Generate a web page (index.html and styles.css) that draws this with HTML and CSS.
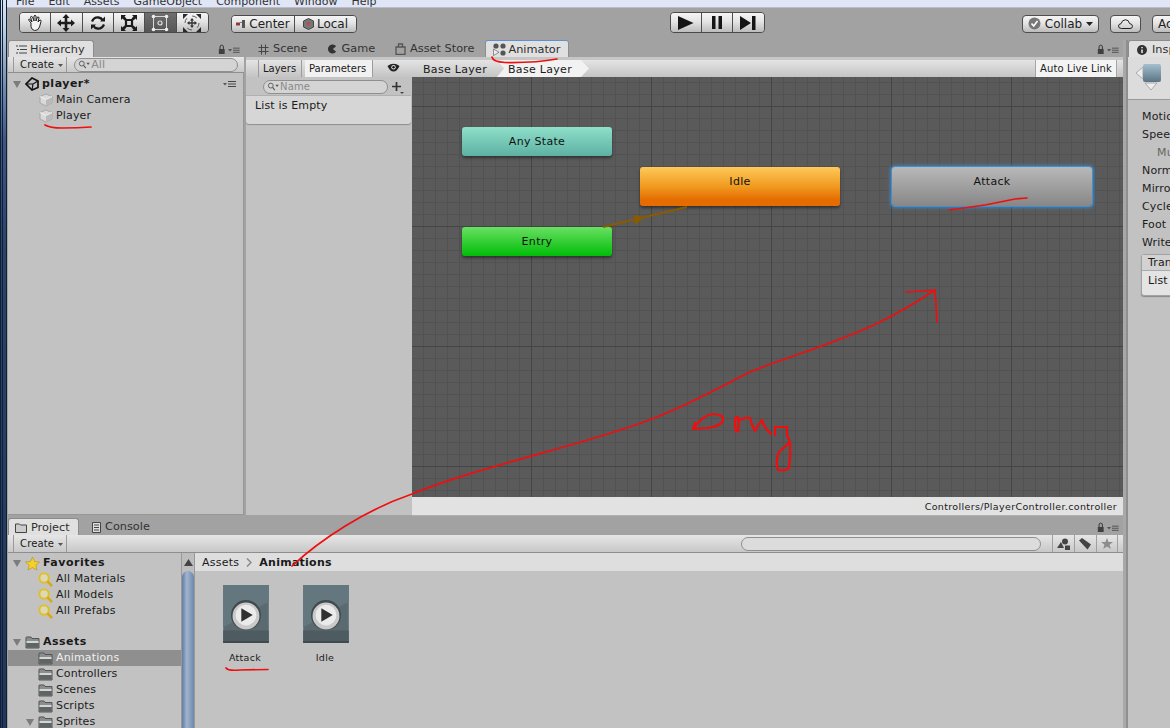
FILE: index.html
```html
<!DOCTYPE html>
<html lang="en">
<head>
<meta charset="utf-8">
<title>Unity Animator</title>
<link rel="stylesheet" href="styles.css">
</head>
<body>
<svg class="defs" width="0" height="0">
  <defs>
    <linearGradient id="motion" x1="0" y1="0" x2="0" y2="1"><stop offset="0" stop-color="#a3bfcf"/><stop offset="1" stop-color="#5c7482"/></linearGradient>
    <symbol id="cube" viewBox="0 0 14 14">
      <path d="M7 1 13 3.500V10L7 13 1 10V3.500Z" fill="#d9d9d9" stroke="#a8a8a8"/>
      <path d="M7 6.500V13L13 10V3.500Z" fill="#b9b9b9"/>
      <path d="M1 3.500 7 6.500 13 3.500" fill="none" stroke="#f0f0f0"/>
    </symbol>
    <symbol id="mag" viewBox="0 0 16 16">
      <circle cx="6.500" cy="6.500" r="5" fill="#dcd9b8" stroke="#e5bf17" stroke-width="2"/>
      <path d="M10 10 15 15" stroke="#d9a90c" stroke-width="2.600"/>
    </symbol>
    <symbol id="folder" viewBox="0 0 15 13">
      <path d="M1 3V1.500Q1 1 1.500 1H6L7 2.500H14V12H1Z" fill="#8a8e8e" stroke="#555"/>
      <path d="M1.500 5H13.500V7H1.500Z" fill="#d4d6d6"/>
      <path d="M1.500 7H13.500V11.500H1.500Z" fill="#5f6565"/>
    </symbol>
    <symbol id="lock" viewBox="0 0 30 12">
      <path d="M1 6H8V12H1Z" fill="#404040"/>
      <path d="M2.500 6V3Q4.500 -0.500 6.500 3V6" fill="none" stroke="#404040" stroke-width="1.300"/>
      <path d="M12 6H17L14.500 9Z" fill="#555"/>
      <path d="M18 5H26M18 7.500H26M18 10H26" stroke="#444"/>
    </symbol>
    <symbol id="menu" viewBox="0 0 14 8">
      <path d="M0 3H4L2 5.500Z" fill="#555"/>
      <path d="M5 1.500H13M5 4H13M5 6.500H13" stroke="#444"/>
    </symbol>
    <symbol id="search" viewBox="0 0 14 10">
      <circle cx="4" cy="4" r="2.700" fill="none" stroke="#555"/>
      <path d="M6 6 8.500 9" stroke="#555" stroke-width="1.200"/>
      <path d="M9 3H13L11 5.500Z" fill="#555"/>
    </symbol>
    <symbol id="tri" viewBox="0 0 10 10"><path d="M1 2H9L5 9Z" fill="#7c7c7c"/></symbol>
    <symbol id="clip" viewBox="1 1 44 56">
      <path d="M1 1H45V57H1Z" fill="#5b6a70"/>
      <path d="M1 1H45V17L1 42Z" fill="#64767e"/>
      <path d="M1 45H45V57H1Z" fill="#4e5b60"/>
      <path d="M1 55H45V57H1Z" fill="#3f4a4e"/>
      <circle cx="23" cy="30" r="14.500" fill="#404a4e"/>
      <circle cx="23" cy="31" r="13" fill="#c9c9c9"/>
      <circle cx="23" cy="30" r="10" fill="#ebebeb"/>
      <path d="M18.500 23.500 29.500 30 18.500 36.500Z" fill="#303030"/>
    </symbol>
  </defs>
</svg>

<div class="app">
  <div class="frame"></div>
  <div class="shell">
    <div class="menubar">
      <span>File</span><span>Edit</span><span>Assets</span><span>GameObject</span><span>Component</span><span>Window</span><span>Help</span>
    </div>

    <div class="toolbar">
      <div class="btn-group tools">
        <button class="tb-btn"><svg width="18" height="18" viewBox="0 0 18 18"><path d="M5 9 3 6.500Q2 5 3.500 5L6 8 4.500 3Q5 1.500 6.500 3L8 7V2Q9 .5 10 2V7L11.500 3Q13 2.500 13 4L12 8 14 6Q15.500 6 15 7.500L13.500 13Q12 17 8.500 16.500 6 16 5 13Z" fill="#f4f4f4" stroke="#222"/></svg></button>
        <button class="tb-btn"><svg width="18" height="18" viewBox="0 0 18 18"><path d="M9 0 12.500 4H10.300V7.700H14V5.500L18 9 14 12.500V10.300H10.300V14H12.500L9 18 5.500 14H7.700V10.300H4V12.500L0 9 4 5.500V7.700H7.700V4H5.500Z" fill="#1c1c1c"/></svg></button>
        <button class="tb-btn"><svg width="16" height="16" viewBox="0 0 16 16"><path d="M2 6.500Q4 2 8.500 2.500 11.500 3 12.500 5" fill="none" stroke="#1c1c1c" stroke-width="2.300"/><path d="M10 6.500H15V1.500Z" fill="#1c1c1c"/><path d="M14 9.500Q12 14 7.500 13.500 4.500 13 3.500 11" fill="none" stroke="#1c1c1c" stroke-width="2.300"/><path d="M6 9.500H1V14.500Z" fill="#1c1c1c"/></svg></button>
        <button class="tb-btn"><svg width="18" height="18" viewBox="0 0 18 18"><path d="M6 6H12V12H6Z" fill="none" stroke="#1c1c1c" stroke-width="2.200"/><path d="M1 1H6L4.500 2.500 6.500 4.500 4.500 6.500 2.500 4.500 1 6ZM17 1V6L15.500 4.500 13.500 6.500 11.500 4.500 13.500 2.500 12 1ZM1 17V12L2.500 13.500 4.500 11.500 6.500 13.500 4.500 15.500 6 17ZM17 17H12L13.500 15.500 11.500 13.500 13.500 11.500 15.500 13.500 17 12Z" fill="#1c1c1c"/></svg></button>
        <button class="tb-btn active"><svg width="18" height="18" viewBox="0 0 18 18"><path d="M2.500 2.500H15.500V15.500H2.500Z" fill="none" stroke="#d8d8d8"/><circle cx="2.500" cy="2.500" r="1.800" fill="#eee"/><circle cx="15.500" cy="2.500" r="1.800" fill="#eee"/><circle cx="2.500" cy="15.500" r="1.800" fill="#eee"/><circle cx="15.500" cy="15.500" r="1.800" fill="#eee"/><circle cx="9" cy="9" r="2" fill="none" stroke="#e0e0e0" stroke-width="1.200"/></svg></button>
        <button class="tb-btn"><svg width="20" height="20" viewBox="0 0 20 20"><path d="M10 5 12 7.500H10.700V9.300H12.500V8L15 10 12.500 12V10.700H10.700V12.500H12L10 15 8 12.500H9.300V10.700H7.500V12L5 10 7.500 8V9.300H9.300V7.500H8Z" fill="#333"/><path d="M1 1H6L1 6ZM19 1V6L14 1ZM1 19V14L6 19ZM19 19H14L19 14Z" fill="#2a2a2a"/><circle cx="10" cy="10" r="7" fill="none" stroke="#555" stroke-dasharray="5 6"/></svg></button>
      </div>
      <div class="btn-group pivot">
        <button class="tb-btn text-btn center"><svg width="10" height="8" viewBox="0 0 10 8"><path d="M0 2.500H4V5.500H0Z" fill="#8a3a3a"/><path d="M4 2.500H6" stroke="#777"/><path d="M6 0H9V8H6Z" fill="#555"/></svg>Center</button>
        <button class="tb-btn text-btn local"><svg width="11" height="12" viewBox="0 0 11 12"><path d="M5.500 .5 10.500 3V9L5.500 11.500.5 9V3Z" fill="#777" stroke="#444"/><path d="M3 4H8L5.500 8Z" fill="#b84b4b"/></svg>Local</button>
      </div>
      <div class="btn-group play">
        <button class="tb-btn"><svg width="16" height="14" viewBox="0 0 16 14"><path d="M0 0 15.500 7 0 14Z" fill="#151515"/></svg></button>
        <button class="tb-btn"><svg width="10" height="13" viewBox="0 0 10 13"><path d="M0 0H3.500V13H0ZM6.500 0H10V13H6.500Z" fill="#151515"/></svg></button>
        <button class="tb-btn"><svg width="16" height="14" viewBox="0 0 16 14"><path d="M0 0 11 7 0 14ZM12 0H15.500V14H12Z" fill="#151515"/></svg></button>
      </div>
      <button class="tb-btn text-btn solo collab"><svg width="13" height="13" viewBox="0 0 13 13"><circle cx="6.500" cy="6.500" r="6" fill="#777"/><path d="M3.500 6.500 5.700 9 9.500 4" fill="none" stroke="#fff" stroke-width="1.600"/></svg>Collab<svg width="7" height="4" viewBox="0 0 7 4"><path d="M0 0H7L3.500 4Z" fill="#222"/></svg></button>
      <button class="tb-btn solo cloud"><svg width="15" height="10" viewBox="0 0 15 10"><path d="M3.500 9.500Q.5 9.500.5 7 .5 5 3 4.700 4 1 7.500.7 11 1 11.500 4.500 14.500 5 14.500 7.300 14.500 9.500 12 9.500Z" fill="none" stroke="#222"/></svg></button>
      <button class="tb-btn text-btn solo account">Account</button>
    </div>

    <div class="dock">
      <div class="dock-main">
        <div class="upper">
          <section class="hierarchy">
            <div class="tabs">
              <div class="tab on hier-tab"><svg width="11" height="9" viewBox="0 0 11 9"><path d="M0 1H2M3 1H11M1 4.500H3M4 4.500H11M0 8H2M3 8H11" stroke="#444"/></svg>Hierarchy</div>
              <svg class="tab-tools" width="25" height="10"><use href="#lock"/></svg>
            </div>
            <div class="pane-bar">
              <div class="create">Create<svg width="5" height="3" viewBox="0 0 5 3"><path d="M0 0H5L2.500 3Z" fill="#555"/></svg></div>
              <div class="search hier-search"><svg width="13" height="9"><use href="#search"/></svg>All</div>
            </div>
            <div class="tree hier-tree">
              <div class="row root"><svg class="tri" width="10" height="10"><use href="#tri"/></svg><svg class="unity" width="14" height="14" viewBox="0 0 14 14"><path d="M7 1 13 4V10.500L7 13 1 7Z" fill="none" stroke="#111" stroke-width="1.700"/><path d="M1 7H8L13 4M8 7 7 13" fill="none" stroke="#111" stroke-width="1.200"/></svg><b>player*</b><svg class="row-menu" width="14" height="8"><use href="#menu"/></svg></div>
              <div class="row item"><svg width="14" height="14"><use href="#cube"/></svg>Main Camera</div>
              <div class="row item"><svg width="14" height="14"><use href="#cube"/></svg>Player</div>
            </div>
          </section>

          <section class="animator">
            <div class="tabs">
              <div class="tab plain"><svg width="11" height="11" viewBox="0 0 11 11"><path d="M3.500 .5V10.500M7.500 .5V10.500M.5 3.500H10.500M.5 7.500H10.500" stroke="#444"/></svg>Scene</div>
              <div class="tab plain"><svg width="10" height="10" viewBox="0 0 11 11"><path d="M10 2.500A5 5 0 1 0 10 8.500L6.500 5.500Z" fill="#333"/></svg>Game</div>
              <div class="tab plain"><svg width="11" height="12" viewBox="0 0 11 12"><path d="M1 4H10V11.500H1ZM3.500 4V1H7.500V4" fill="none" stroke="#555" stroke-width="1.300"/></svg>Asset Store</div>
              <div class="tab on anim-tab"><svg width="13" height="13" viewBox="0 0 13 13"><circle cx="3" cy="3" r="2.600" fill="#555"/><circle cx="10" cy="3" r="2.600" fill="#555"/><circle cx="10" cy="10" r="2.600" fill="#555"/><path d="M.5 6V12.500L6 9.300Z" fill="#eee" stroke="#666" stroke-width=".7"/></svg>Animator</div>
              <svg class="tab-tools" width="25" height="10"><use href="#lock"/></svg>
            </div>
            <div class="anim-gap"></div>
            <div class="anim-bar">
              <div class="subtabs">
                <div class="subtab">Layers</div>
                <div class="subtab on">Parameters</div>
                <div class="eye"><svg width="13" height="9" viewBox="0 0 13 9"><path d="M.5 3Q6.500-1.500 12.500 3 10 8.500 6.500 8.500 3 8.500.5 3Z" fill="#222"/><circle cx="6.500" cy="4.200" r="2.200" fill="#ddd"/><circle cx="6.500" cy="4.200" r="1.200" fill="#111"/></svg></div>
              </div>
              <div class="crumbs">
                <div class="crumb">Base Layer</div>
                <div class="crumb on">Base Layer</div>
                <div class="live">Auto Live Link</div>
              </div>
            </div>
            <div class="anim-body">
              <aside class="params">
                <div class="param-search">
                  <div class="search name-search"><svg width="13" height="9"><use href="#search"/></svg>Name</div>
                  <svg class="plus" width="12" height="12" viewBox="0 0 12 12"><path d="M4.500 0V9M0 4.500H9" stroke="#333" stroke-width="1.700"/><path d="M8 10H12L10 12Z" fill="#444"/></svg>
                </div>
                <div class="empty-box">List is Empty</div>
              </aside>
              <div class="graph-col">
                <div class="graph">
                  <div class="node any">Any State</div>
                  <div class="node idle">Idle</div>
                  <div class="node entry">Entry</div>
                  <div class="node attack">Attack</div>
                  <svg class="transition" width="90" height="24" viewBox="0 0 90 24"><path d="M1 23 85 3" stroke="#8a5a00" stroke-width="2"/><path d="M32 11 43 13 33 21Z" fill="#8a5a00"/></svg>
                </div>
                <div class="status">Controllers/PlayerController.controller</div>
              </div>
            </div>
          </section>
        </div>

        <section class="project">
          <div class="tabs proj-tabs">
            <div class="tab on proj-tab"><svg width="12" height="10" viewBox="0 0 12 10"><path d="M.5 2V1H4.500L5.500 2H11.500V9.500H.5Z" fill="#ccc" stroke="#444"/></svg>Project</div>
            <div class="tab plain console"><svg width="9" height="11" viewBox="0 0 9 11"><path d="M.5.5H8.500V10.500H.5ZM2 3H7M2 5.500H7M2 8H7" fill="#ddd" stroke="#444"/></svg>Console</div>
            <svg class="tab-tools" width="25" height="10"><use href="#lock"/></svg>
          </div>
          <div class="pane-bar proj-bar">
            <div class="create">Create<svg width="5" height="3" viewBox="0 0 5 3"><path d="M0 0H5L2.500 3Z" fill="#555"/></svg></div>
            <div class="search proj-search"></div>
            <div class="filter"><svg width="13" height="12" viewBox="0 0 13 12"><path d="M0 10 4 4 7 10Z" fill="#444"/><circle cx="8" cy="3.500" r="3" fill="#444"/><path d="M8 7.500H13V12H8Z" fill="#444"/></svg></div>
            <div class="filter"><svg width="13" height="12" viewBox="0 0 13 12"><path d="M0 2.500 3 0 12 6.500 8.500 11.500Z" fill="#444"/></svg></div>
            <div class="filter last"><svg width="12" height="11" viewBox="0 0 12 11"><path d="M6 0 7.500 4H12L8.500 6.800 9.800 11 6 8.500 2.200 11 3.500 6.800 0 4H4.500Z" fill="#8c8c8c"/></svg></div>
          </div>
          <div class="proj-body">
            <div class="tree proj-tree">
              <div class="row root"><svg class="tri" width="10" height="10"><use href="#tri"/></svg><svg width="15" height="15" viewBox="0 0 15 15"><path d="M7.500 1 9.500 5.500 14.500 6 10.800 9.300 12 14 7.500 11.500 3 14 4.200 9.300.5 6 5.500 5.500Z" fill="#f5cf2a" stroke="#b99a14" stroke-width=".7"/></svg><b>Favorites</b></div>
              <div class="row item"><svg width="15" height="15"><use href="#mag"/></svg>All Materials</div>
              <div class="row item"><svg width="15" height="15"><use href="#mag"/></svg>All Models</div>
              <div class="row item"><svg width="15" height="15"><use href="#mag"/></svg>All Prefabs</div>
              <div class="row spacer"></div>
              <div class="row root"><svg class="tri" width="10" height="10"><use href="#tri"/></svg><svg width="15" height="13"><use href="#folder"/></svg><b>Assets</b></div>
              <div class="row item sel"><svg width="15" height="13"><use href="#folder"/></svg>Animations</div>
              <div class="row item"><svg width="15" height="13"><use href="#folder"/></svg>Controllers</div>
              <div class="row item"><svg width="15" height="13"><use href="#folder"/></svg>Scenes</div>
              <div class="row item"><svg width="15" height="13"><use href="#folder"/></svg>Scripts</div>
              <div class="row item sub"><svg class="tri" width="10" height="10"><use href="#tri"/></svg><svg width="15" height="13"><use href="#folder"/></svg>Sprites</div>
            </div>
            <div class="scrollbar">
              <svg width="9" height="7" viewBox="0 0 9 7"><path d="M4.500 0 9 7H0Z" fill="#444"/></svg>
              <div class="thumb"></div>
            </div>
            <div class="browser">
              <div class="breadcrumb"><span>Assets</span><svg width="6" height="9" viewBox="0 0 6 9"><path d="M1 .5 5 4.500 1 8.500" fill="none" stroke="#888" stroke-width="1.500"/></svg><b>Animations</b></div>
              <div class="assets">
                <figure class="asset"><svg width="46" height="58"><use href="#clip"/></svg><figcaption>Attack</figcaption></figure>
                <figure class="asset"><svg width="46" height="58"><use href="#clip"/></svg><figcaption>Idle</figcaption></figure>
              </div>
            </div>
          </div>
        </section>
      </div>

      <section class="inspector">
        <div class="tabs ins-tabs">
          <div class="tab on ins-tab"><svg width="10" height="10" viewBox="0 0 10 10"><circle cx="5" cy="5" r="5" fill="#333"/><path d="M5 2V3.200M5 4.500V8" stroke="#eee" stroke-width="1.500"/></svg>Inspector</div>
        </div>
        <div class="ins-head"><svg width="28" height="32" viewBox="0 0 28 32"><path d="M8 5 1 11 8 17Z" fill="#eee" stroke="#aaa"/><path d="M10 21H22L16 28Z" fill="#eee" stroke="#aaa"/><rect x="8" y="2" width="18" height="18" rx="2" fill="url(#motion)"/></svg></div>
        <div class="ins-fields">
          <div class="field">Motion</div>
          <div class="field">Speed</div>
          <div class="field muted">Multiplier</div>
          <div class="field">Normalized</div>
          <div class="field">Mirror</div>
          <div class="field">Cycle Offset</div>
          <div class="field">Foot IK</div>
          <div class="field">Write Defaults</div>
        </div>
        <div class="trans-box">
          <div class="trans-head">Transitions</div>
          <div class="trans-body">List is Empty</div>
        </div>
      </section>
    </div>
  </div>
</div>

<svg class="ink" width="1170" height="728" viewBox="0 0 1170 728">
  <g fill="none" stroke="#f00e0e" stroke-width="1.700" stroke-linecap="round" stroke-linejoin="round">
    <path d="M45 125Q50 128 62 128 78 128 91 127"/>
    <path d="M492 57Q493 62 505 62.500 535 63 557 59"/>
    <path d="M949 210 985 205 1015 199 1027 198"/>
    <path d="M226 668Q228 671 240 670L268 669.500"/>
    <path d="M292 566C320 540 365 510 412 494 470 470 560 450 620 430 670 415 710 392 750 372 790 356 840 342 880 322 900 312 920 300 935 290"/>
    <path d="M906 292 922 291 935 290 936 305 937 322"/>
    <g stroke-width="2.200">
      <path d="M695 423 693 429 707 428Q722 426 723 420 724 414 712 414 702 416 694 428"/>
      <path d="M736 431Q734 422 736 417L738 417Q739 424 738 431 735 432 736 431M738 422Q742 417 750 418"/>
      <path d="M750 418Q752 426 755 431 758 424 762 420 763 426 771 434"/>
      <path d="M775 435V427H787V435L790 442 779 452Q775 462 778 470 786 471 789 468 791 455 790 442"/>
    </g>
  </g>
</svg>
</body>
</html>
```

FILE: styles.css
```css
* { box-sizing: border-box; }
html, body { margin: 0; padding: 0; }
body {
  width: 1170px;
  height: 728px;
  overflow: hidden;
  position: relative;
  font: 11px/16px "DejaVu Sans", Verdana, sans-serif;
  letter-spacing: .15px;
  color: #1a1a1a;
  background: #a2a2a2;
}
svg { display: block; flex: none; }
.defs { position: absolute; }
.app { display: flex; width: 1170px; height: 728px; }
.frame {
  width: 7px;
  flex: none;
  background:
    linear-gradient(90deg, #0f2036 0 1px, transparent 1px 2px, #0f2036 2px 3px, transparent 3px 6px, #0f2036 6px),
    linear-gradient(180deg, #d8e6f2 0, #c3d4e6 24px, #6d88ad 90px, #3d5782 140px, #2c4267 250px, #22375a 728px);
}
.shell { flex: 1; min-width: 0; display: flex; flex-direction: column; }

/* menu */
.menubar {
  height: 8px;
  flex: none;
  overflow: hidden;
  display: flex;
  gap: 14px;
  padding-left: 9px;
  background: #e0e6f5;
  border-bottom: 1px solid #b9bccb;
  font: 11px/4px "DejaVu Sans", sans-serif;
  letter-spacing: 0;
  color: #333;
}

/* toolbar */
.toolbar {
  height: 32px;
  flex: none;
  display: flex;
  align-items: center;
  padding: 1px 0 0 12px;
  background: #a2a2a2;
  overflow: hidden;
}
.btn-group { display: flex; flex: none; border: 1px solid #4a4a4a; border-radius: 4px; overflow: hidden; }
.tb-btn {
  display: flex;
  flex: none;
  align-items: center;
  justify-content: center;
  gap: 3px;
  padding: 0;
  margin: 0;
  border: 0;
  border-right: 1px solid #4e4e4e;
  background: linear-gradient(180deg, #f5f5f5 0, #e4e4e4 45%, #bcbcbc 100%);
  font: 12px/14px "DejaVu Sans", sans-serif;
  color: #222;
}
.tb-btn:last-child { border-right: 0; }
.tools { height: 21px; margin-top: -4px; }
.tools .tb-btn { width: 31.33px; }
.tools .active { background: linear-gradient(180deg, #6e6e6e, #565656); }
.pivot { height: 18px; margin-left: 22px; margin-top: -2px; }
.center { width: 63px; }
.local { width: 61px; }
.play { height: 21px; margin-left: 313px; margin-top: -4px; }
.play .tb-btn { width: 31px; }
.solo { height: 18px; margin-top: -2px; border: 1px solid #4e4e4e !important; border-radius: 4px; }
.collab { width: 77px; margin-left: 257px; gap: 4px; }
.cloud { width: 31px; margin-left: 11px; }
.account { width: 60px; margin-left: 11px; justify-content: flex-start; padding-left: 5px; }

/* dock */
.dock { flex: 1; min-height: 0; display: flex; }
.dock-main { width: 1116px; flex: none; display: flex; flex-direction: column; }
.upper { height: 475px; flex: none; display: flex; gap: 2px; padding-left: 1px; }
.tabs {
  height: 17px;
  flex: none;
  display: flex;
  align-items: flex-end;
  position: relative;
  background: #a2a2a2;
}
.tab {
  height: 17px;
  flex: none;
  display: flex;
  align-items: center;
  gap: 4px;
  padding-top: 1px;
  font-size: 11.300px;
  letter-spacing: 0;
  color: #2e2e2e;
}
.tab.on {
  background: #e0e0e0;
  border: 1px solid #8c8c8c;
  border-bottom: 0;
  border-radius: 3px 3px 0 0;
}
.tab.plain { color: #333; }
.tab-tools { position: absolute; right: 1px; top: 4px; }
.hier-tab { width: 86px; padding-left: 7px; gap: 3px; }

/* hierarchy */
.hierarchy { width: 236px; flex: none; display: flex; flex-direction: column; }
.pane-bar {
  height: 16px;
  flex: none;
  display: flex;
  align-items: center;
  background: linear-gradient(180deg, #e6e6e6, #c8c8c8);
  border-bottom: 1px solid #8e8e8e;
}
.create {
  display: flex;
  align-items: center;
  gap: 4px;
  height: 16px;
  margin-left: 5px;
  padding: 1px 3px 0 6px;
  font-size: 10px;
  border-left: 1px solid #9a9a9a;
  border-right: 1px solid #9a9a9a;
}
.search {
  display: flex;
  align-items: center;
  height: 14px;
  border: 1px solid #8f8f8f;
  border-radius: 7px;
  background: #d4d4d4;
  font-size: 11px;
  color: #8a8a8a;
  padding-left: 3px;
}
.hier-search { width: 164px; margin-left: 7px; }
.tree { background: #c2c2c2; }
.hier-tree { flex: 1; padding-top: 3px; border: 1px solid #979797; border-top: 0; border-left: 0; }
.row { height: 16px; display: flex; align-items: center; gap: 4px; white-space: nowrap; position: relative; }
.row b { font-weight: 700; letter-spacing: .5px; }
.tri { margin-left: 4px; }
.row.root { padding-left: 0; gap: 3px; }
.row.item { padding-left: 31px; gap: 3px; color: #1c1c1c; }
.row-menu { position: absolute; right: 6px; top: 4px; }
.spacer { height: 15px; }
.sel { background: #8f8f8f; color: #efefef !important; }

/* animator */
.animator { flex: 1; min-width: 0; display: flex; flex-direction: column; }
.animator > .tabs { gap: 20px; padding-left: 12px; }
.anim-tab { width: 84px; padding-left: 7px; gap: 2px; border-top: 1px solid #5f8fd0 !important; margin-left: -9px; }
.anim-gap { height: 3px; flex: none; background: #c6c6c6; }
.anim-bar { height: 17px; flex: none; display: flex; background: linear-gradient(180deg, #e4e4e4, #c4c4c4); }
.subtabs { width: 166px; flex: none; display: flex; padding-left: 12px; gap: 3px; font-size: 10px; letter-spacing: 0; }
.subtab { height: 17px; width: 44px; padding: 1px 0 0 4px; display: flex; align-items: center; border-left: 1px solid #9c9c9c; border-right: 1px solid #9c9c9c; }
.subtab.on { width: 68px; padding-left: 4px; background: #f1f1f1; border-left: 0; }
.eye { padding: 3px 0 0 11px; }
.crumbs { flex: 1; display: flex; font-size: 11px; letter-spacing: .3px; }
.crumb { height: 17px; display: flex; align-items: center; padding: 2px 0 0 11px; width: 85px; }
.crumb.on {
  width: 92px;
  padding-left: 11px;
  background: #f2f2f2;
  clip-path: polygon(0 100%, 7px 50%, 0 0, 84px 0, 92px 50%, 84px 100%);
}
.live {
  margin-left: auto;
  width: 82px;
  flex: none;
  margin-right: 6px;
  height: 17px;
  display: flex;
  align-items: center;
  justify-content: center;
  background: #f4f4f4;
  border-left: 1px solid #a6a6a6;
  border-right: 1px solid #a6a6a6;
  font-size: 10px;
  letter-spacing: .1px;
  padding-top: 1px;
}
.anim-body { flex: 1; min-height: 0; display: flex; }
.params { width: 166px; flex: none; background: #c2c2c2; display: flex; flex-direction: column; }
.param-search { height: 19px; flex: none; display: flex; align-items: center; padding-left: 17px; gap: 3px; }
.name-search { width: 125px; font-size: 10px; }
.plus { margin-left: 1px; margin-top: 2px; }
.empty-box {
  height: 28px;
  margin-right: 1px;
  padding: 2px 9px;
  background: #d6d6d6;
  border-radius: 0 0 3px 3px;
  box-shadow: 0 1px 1px #8d8d8d, 0 -1px 0 #b0b0b0;
}
.graph-col { flex: 1; min-width: 0; display: flex; flex-direction: column; }
.graph {
  height: 420px;
  flex: none;
  position: relative;
  overflow: hidden;
  background-color: #5a5a5a;
  background-image:
    linear-gradient(#454545 1px, transparent 1px),
    linear-gradient(90deg, #454545 1px, transparent 1px),
    linear-gradient(#525252 1px, transparent 1px),
    linear-gradient(90deg, #525252 1px, transparent 1px);
  background-size: 120px 120px, 120px 120px, 12px 12px, 12px 12px;
  background-position: 0 29px, -1px 0, 0 5px, -1px 0;
}
.node {
  position: absolute;
  display: flex;
  align-items: center;
  justify-content: center;
  border-radius: 3px;
  box-shadow: 0 2px 3px rgba(0, 0, 0, .45);
  font-size: 11px;
  letter-spacing: .3px;
  color: #111;
}
.any { left: 50px; top: 50px; width: 150px; height: 29px; background: linear-gradient(180deg, #8ee0c9, #5eb0a3); }
.entry { left: 50px; top: 150px; width: 150px; height: 29px; background: linear-gradient(180deg, #69e063, #00bd07); }
.idle { left: 228px; top: 90px; width: 200px; height: 39px; padding-bottom: 10px; background: linear-gradient(180deg, #ffc95a, #f09a20 50%, #e46c00 85%); }
.attack { left: 480px; top: 90px; width: 200px; height: 39px; padding-bottom: 10px; background: linear-gradient(180deg, #b8b8b8, #878787); box-shadow: 0 0 0 1px #3f8fd6, 0 0 4px 1px #3f8fd6; }
.transition { position: absolute; left: 190px; top: 127px; }
.status {
  flex: 1;
  display: flex;
  align-items: center;
  justify-content: flex-end;
  padding: 2px 6px 0 0;
  background: #e2e2e2;
  border-bottom: 1px solid #b0b0b0;
  font-size: 9.500px;
  letter-spacing: .35px;
}

/* project */
.project { flex: 1; min-height: 0; display: flex; flex-direction: column; padding: 3px 0 0 1px; }
.proj-tabs { gap: 13px; }
.proj-tab { width: 71px; padding-left: 6px; }
.proj-bar { height: 18px; }
.proj-bar .create { height: 17px; }
.proj-search { width: 300px; margin-left: 674px; background: #dcdcdc; }
.filter { width: 22px; height: 17px; display: flex; align-items: center; justify-content: center; border-left: 1px solid #a0a0a0; }
.proj-search + .filter { margin-left: 11px; }
.filter.last { border-right: 1px solid #a0a0a0; }
.proj-body { flex: 1; min-height: 0; display: flex; }
.proj-tree { width: 173px; flex: none; padding-top: 2px; overflow: hidden; }
.proj-tree .row.item { padding-left: 30px; }
.proj-tree .row.sub { padding-left: 17px; }
.proj-tree .sub .tri { margin: 0; }
.scrollbar { width: 14px; flex: none; background: #bdbdbd; border-left: 1px solid #999; border-right: 1px solid #999; display: flex; flex-direction: column; align-items: center; padding-top: 6px; }
.thumb { width: 12px; flex: 1; margin-top: 5px; border-radius: 6px 6px 0 0; background: linear-gradient(90deg, #5f7c9f, #a0b5cf 40%, #6d88a8); }
.browser { flex: 1; min-width: 0; background: #c2c2c2; display: flex; flex-direction: column; }
.breadcrumb { height: 18px; flex: none; display: flex; align-items: center; gap: 7px; padding: 1px 0 0 7px; background: #dedede; letter-spacing: .25px; }
.assets { display: flex; gap: 34px; padding: 14px 0 0 28px; }
.asset { margin: 0; width: 46px; display: flex; flex-direction: column; align-items: center; gap: 6px; }
.asset figcaption { font-size: 9.500px; letter-spacing: .3px; line-height: 18px; margin-left: -2px; }

/* inspector */
.inspector { flex: 1; min-width: 0; margin-left: 5px; overflow: hidden; white-space: nowrap; background: #c2c2c2; box-shadow: -2px 0 0 #8f8f8f, -5px 0 0 #a8a8a8; }
.ins-tabs { width: 60px; }
.ins-tab { width: 70px; padding-left: 8px; gap: 5px; }
.ins-head { height: 43px; padding: 5px 0 0 7px; background: #dcdcdc; border-bottom: 1px solid #9a9a9a; }
.ins-fields { padding: 8px 0 0 14px; }
.field { height: 18px; line-height: 18px; color: #1c1c1c; }
.field.muted { padding-left: 15px; color: #666; }
.trans-box { margin: 2px 0 0 13px; width: 120px; height: 42px; border: 1px solid #a2a2a2; border-radius: 3px; background: #e4e4e4; box-shadow: 0 1px 1px #888; }
.trans-head { height: 16px; padding-left: 6px; background: #d2d2d2; border-bottom: 1px solid #aaa; }
.trans-body { padding: 2px 0 0 6px; }

/* annotations */
.ink { position: absolute; left: 0; top: 0; pointer-events: none; }
```
